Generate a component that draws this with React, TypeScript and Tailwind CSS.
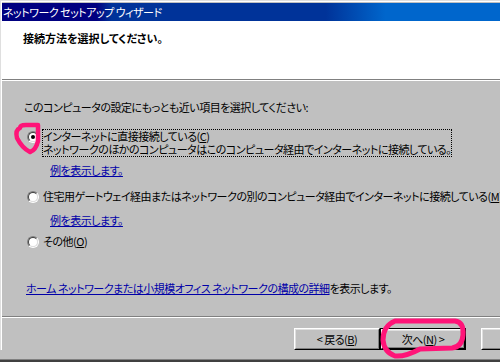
import React from "react";

const font = "font-['MS_UI_Gothic','Noto_Sans_CJK_JP',sans-serif] [font-feature-settings:'palt']";

function Radio({ checked = false }: { checked?: boolean }) {
  return (
    <span className="mt-[1px] inline-flex h-[12px] w-[12px] shrink-0 rounded-full border border-t-[#808080] border-l-[#808080] border-b-white border-r-white">
      <span className="flex h-full w-full items-center justify-center rounded-full border border-t-[#404040] border-l-[#404040] border-b-[#dfdfdf] border-r-[#dfdfdf] bg-white">
        {checked && <span className="h-[4px] w-[4px] rounded-full bg-black" />}
      </span>
    </span>
  );
}

function Button({ children, isDefault = false }: { children: React.ReactNode; isDefault?: boolean }) {
  return (
    <div className={`h-[22px] w-[86px] shrink-0 ${isDefault ? "border border-black" : ""}`}>
      <div className="h-full w-full border border-t-white border-l-white border-b-black border-r-black">
        <div className="flex h-full w-full items-center justify-center border border-t-[#dfdfdf] border-l-[#dfdfdf] border-b-[#808080] border-r-[#808080] text-black">
          {children}
        </div>
      </div>
    </div>
  );
}

function Link({ children }: { children: React.ReactNode }) {
  return <span className="text-[#0000a8] underline underline-offset-[1px]">{children}</span>;
}

export default function App() {
  return (
    <div className={`relative h-[362px] w-[500px] overflow-hidden bg-[#c0c0c0] ${font} text-[11px] leading-[13px] tracking-[-0.5px] text-black`}>
      <div className="border-t border-l border-t-[#dfdfdf] border-l-[#dfdfdf]">
        <div className="border-t border-l border-white pt-[1px]">
          {/* title bar */}
          <div className="flex h-[18px] items-center whitespace-nowrap bg-[linear-gradient(90deg,#000080_0%,#000080_19%,#003399_22%,#003399_65%,#0066cc_77%,#0066cc_100%)] pl-[1px] text-white">
            ネットワーク セットアップ ウィザード
          </div>

          {/* header */}
          <div className="h-[58px] bg-white pt-[10px] pl-[21px] font-bold leading-[14px] tracking-normal">
            接続方法を選択してください。
          </div>
          <div className="h-px bg-[#808080]" />
          <div className="h-px bg-white" />

          {/* body */}
          <div className="flex flex-col whitespace-nowrap pl-[22px] pt-[20px]">
            <div>このコンピュータの設定にもっとも近い項目を選択してください:</div>

            <div className="mt-[16px] flex items-start gap-[3px] pl-[3px]">
              <Radio checked />
              <div className="-mt-[1px] border border-dotted border-black">
                <div className="h-[13px]">インターネットに直接接続している(<span className="underline">C</span>)</div>
                <div className="h-[13px]">ネットワークのほかのコンピュータはこのコンピュータ経由でインターネットに接続している。</div>
              </div>
            </div>
            <div className="mt-[7px] pl-[26px]">
              <Link>例を表示します。</Link>
            </div>

            <div className="mt-[13px] flex items-start gap-[4px] pl-[3px]">
              <Radio />
              <div>
                住宅用ゲートウェイ経由またはネットワークの別のコンピュータ経由でインターネットに接続している(<span className="underline">M</span>)
              </div>
            </div>
            <div className="mt-[11px] pl-[26px]">
              <Link>例を表示します。</Link>
            </div>

            <div className="mt-[8px] flex items-start gap-[4px] pl-[3px]">
              <Radio />
              <div>
                その他(<span className="underline">O</span>)
              </div>
            </div>

            <div className="mt-[34px] pl-[2px]">
              <Link>ホーム ネットワークまたは小規模オフィス ネットワークの構成の詳細</Link>を表示します。
            </div>
          </div>

          <div className="mt-[21px] h-px bg-[#808080]" />
          <div className="h-px bg-white" />

          {/* buttons */}
          <div className="mt-[10px] flex pl-[292px]">
            <Button>
              &lt;&nbsp;戻る(<span className="underline">B</span>)
            </Button>
            <Button isDefault>
              次へ(<span className="underline">N</span>)&nbsp;&gt;
            </Button>
            <div className="ml-[15px]">
              <Button>キャンセル</Button>
            </div>
          </div>
        </div>
      </div>

      <div className="absolute bottom-0 left-0 right-0 h-[3px] border-t border-[#808080] bg-[#404040]" />

      {/* hand-drawn highlight marks */}
      <svg className="pointer-events-none absolute inset-0" width="500" height="362" viewBox="0 0 500 362" fill="none">
        <path
          d="M20 128 Q20 125 26 125 L38 125 L38 141 Q36 150 30 152 Q22 148 17 138 Q15 130 20 128 Z"
          stroke="#ff1478"
          strokeWidth="4.5"
          strokeLinejoin="round"
        />
        <path
          d="M395 321 L455 321 Q464 322 463 335 Q462 347 452 348 L420 349 Q405 357 395 356 Q384 352 383 340 Q383 326 395 321 Z"
          stroke="#ff1478"
          strokeWidth="5"
          strokeLinejoin="round"
        />
      </svg>
    </div>
  );
}
